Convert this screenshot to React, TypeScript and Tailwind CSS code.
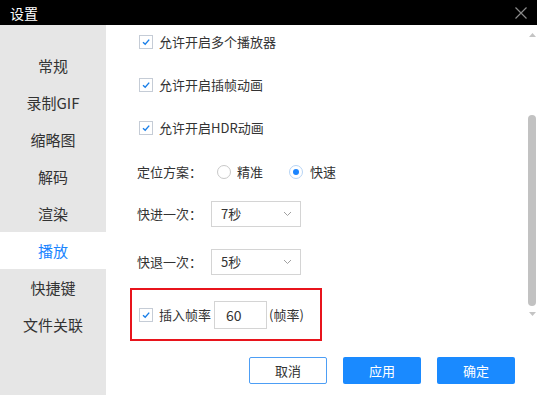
import React from "react";

const navItems = ["常规", "录制GIF", "缩略图", "解码", "渲染", "播放", "快捷键", "文件关联"];
const activeNav = "播放";

function CheckBox() {
  return (
    <span className="flex h-[14px] w-[14px] shrink-0 items-center justify-center border border-[#c5ccd6] bg-white">
      <svg width="10" height="10" viewBox="0 0 10 10">
        <path d="M2 5.2 L4.2 7.3 L8.2 2.6" fill="none" stroke="#1a7fe8" strokeWidth="1.4" />
      </svg>
    </span>
  );
}

function Radio({ checked }: { checked?: boolean }) {
  return (
    <span
      className={[
        "flex h-[14px] w-[14px] shrink-0 items-center justify-center rounded-full border bg-white",
        checked ? "border-[#b7d4f5]" : "border-[#c8c8c8]",
      ].join(" ")}
    >
      {checked && <span className="h-[6px] w-[6px] rounded-full bg-[#1a84ff]" />}
    </span>
  );
}

function Select({ value }: { value: string }) {
  return (
    <div className="flex h-[26px] w-[90px] items-center justify-between border border-[#d4d4d4] bg-white pl-[9px] pr-[8px]">
      <span>{value}</span>
      <svg width="9" height="6" viewBox="0 0 9 6">
        <path d="M1 1 L4.5 4.5 L8 1" fill="none" stroke="#a0a0a0" strokeWidth="1" />
      </svg>
    </div>
  );
}

function CheckRow({ label, className }: { label: string; className?: string }) {
  return (
    <div className={["flex h-[20px] items-center gap-[6px] pl-[33px]", className].join(" ")}>
      <CheckBox />
      <span>{label}</span>
    </div>
  );
}

export default function App() {
  return (
    <div
      className="h-[395px] w-[549px] overflow-hidden bg-white text-[13px] leading-[18px] text-[#333]"
      style={{ fontFamily: '"Noto Sans CJK SC", "Noto Sans", sans-serif' }}
    >
      <div className="w-[537px]">
        {/* title bar */}
        <div className="flex h-[25px] items-center justify-between bg-black pl-[10px] pr-[10px]">
          <span className="text-[14px] text-white">设置</span>
          <svg width="12" height="12" viewBox="0 0 12 12">
            <path d="M0.5 0.5 L11.5 11.5 M11.5 0.5 L0.5 11.5" stroke="#8a8a8a" strokeWidth="1.2" />
          </svg>
        </div>

        <div className="flex h-[370px]">
          {/* sidebar */}
          <div className="flex w-[106px] shrink-0 flex-col bg-[#e6e6e6] pt-[22px]">
            {navItems.map((item) => (
              <div
                key={item}
                className={[
                  "flex h-[37px] items-center justify-center text-[15px]",
                  item === activeNav ? "bg-white text-[#1a84ff]" : "text-[#333]",
                ].join(" ")}
              >
                {item}
              </div>
            ))}
          </div>

          {/* main */}
          <div className="flex flex-1 flex-col">
            <div className="flex items-start">
              <div className="flex flex-1 flex-col pt-[7px]">
                <CheckRow label="允许开启多个播放器" />
                <CheckRow label="允许开启插帧动画" className="mt-[23px]" />
                <CheckRow label="允许开启HDR动画" className="mt-[23px]" />

                <div className="mt-[24px] flex h-[20px] items-center pl-[31px]">
                  <span className="w-[80px]">定位方案：</span>
                  <Radio />
                  <span className="ml-[6px] w-[52px]">精准</span>
                  <Radio checked />
                  <span className="ml-[7px]">快速</span>
                </div>

                <div className="mt-[19px] flex items-center pl-[31px]">
                  <span className="w-[74px]">快进一次：</span>
                  <Select value="7秒" />
                </div>
                <div className="mt-[22px] flex items-center pl-[31px]">
                  <span className="w-[74px]">快退一次：</span>
                  <Select value="5秒" />
                </div>

                <div className="ml-[24px] mt-[13px] flex h-[53px] w-[192px] items-center border-2 border-[#e8141c] pl-[7px]">
                  <CheckBox />
                  <span className="ml-[6px]">插入帧率</span>
                  <div className="ml-[3px] flex h-[28px] w-[53px] items-center border border-[#d4d4d4] pl-[11px] text-[14px]">
                    60
                  </div>
                  <span className="ml-[2px]">(帧率)</span>
                </div>
              </div>

              {/* scrollbar */}
              <div className="mr-[1px] flex w-[8px] flex-col items-center pt-[8px]">
                <svg width="7" height="4" viewBox="0 0 7 4">
                  <path d="M0 4 L3.5 0 L7 4 Z" fill="#c4c4c4" />
                </svg>
                <div className="mt-[78px] h-[191px] w-[8px] rounded-full bg-[#c2c2c2]" />
                <svg width="7" height="4" viewBox="0 0 7 4" className="mt-[6px]">
                  <path d="M0 0 L3.5 4 L7 0 Z" fill="#c4c4c4" />
                </svg>
              </div>
            </div>

            {/* buttons */}
            <div className="mt-[16px] flex justify-end gap-[16px] pr-[22px]">
              <button className="h-[27px] w-[78px] rounded-[2px] border border-[#4d9ef5] bg-white text-[13px] text-[#333]">
                取消
              </button>
              <button className="h-[27px] w-[78px] rounded-[2px] bg-[#1a8aff] text-[13px] text-white">
                应用
              </button>
              <button className="h-[27px] w-[78px] rounded-[2px] bg-[#1a8aff] text-[13px] text-white">
                确定
              </button>
            </div>
          </div>
        </div>
      </div>
    </div>
  );
}
